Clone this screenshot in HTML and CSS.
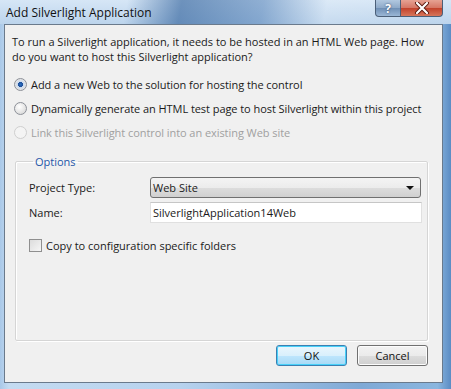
FILE: index.html
```html
<!DOCTYPE html>
<html lang="en">
<head>
    <meta charset="UTF-8">
    <title>Add Silverlight Application</title>
    <link rel="stylesheet" href="styles.css">
</head>
<body>
    <div class="window">
        <!-- title bar -->
        <div class="titlebar">
            <span class="title">Add Silverlight Application</span>
            <div class="caption-buttons">
                <div class="cap-btn help">?</div>
                <div class="cap-btn close">
                    <svg width="16" height="12" viewBox="0 0 16 12">
                        <path d="M3 1 L13 11 M13 1 L3 11" stroke="#5a1a10" stroke-width="4" stroke-linecap="round"/>
                        <path d="M3 1 L13 11 M13 1 L3 11" stroke="#fff" stroke-width="2.2" stroke-linecap="round"/>
                    </svg>
                </div>
            </div>
        </div>

        <div class="client">
            <p class="intro">To run a Silverlight application, it needs to be hosted in an HTML Web page. How do you want to host this Silverlight application?</p>

            <div class="options">
                <label class="radio-row">
                    <span class="radio checked"></span>
                    Add a new Web to the solution for hosting the control
                </label>
                <label class="radio-row">
                    <span class="radio"></span>
                    Dynamically generate an HTML test page to host Silverlight within this project
                </label>
                <label class="radio-row disabled">
                    <span class="radio"></span>
                    Link this Silverlight control into an existing Web site
                </label>
            </div>

            <fieldset class="group">
                <legend>Options</legend>
                <div class="field-row">
                    <span class="field-label">Project Type:</span>
                    <div class="combo">
                        <span>Web Site</span>
                        <span class="arrow"></span>
                    </div>
                </div>
                <div class="field-row">
                    <span class="field-label">Name:</span>
                    <div class="textbox">SilverlightApplication14Web</div>
                </div>
                <label class="check-row">
                    <span class="checkbox"></span>
                    Copy to configuration specific folders
                </label>
            </fieldset>

            <div class="buttons">
                <button class="btn default">OK</button>
                <button class="btn">Cancel</button>
            </div>
        </div>
    </div>
</body>
</html>
```

FILE: styles.css
```css
body {
    margin: 0;
    width: 451px;
    height: 389px;
    overflow: hidden;
    font-family: "Open Sans", "Noto Sans", sans-serif;
    font-size: 11px;
    color: #1a1a1a;
}

.window {
    height: 389px;
    display: flex;
    flex-direction: column;
    background: linear-gradient(90deg, #a9c8e8 0%, #c4dbf1 2%, #b7d2ee 40%, #7fa9d6 80%, #8ab6df 97%, #5b8cc4 100%);
}

/* title bar */
.titlebar {
    height: 24px;
    display: flex;
    align-items: flex-start;
    justify-content: space-between;
    background:
        linear-gradient(100deg, rgba(255,255,255,0) 0%, rgba(255,255,255,0) 28%, rgba(40,90,150,0.6) 40%, rgba(60,110,170,0.45) 58%, rgba(255,255,255,0.15) 72%, rgba(255,255,255,0) 100%),
        linear-gradient(180deg, #d6e6f6 0%, #bcd4ec 100%);
}

.title {
    margin: 4px 0 0 6px;
    font-size: 12px;
    color: #111;
}

.caption-buttons {
    display: flex;
    margin-right: 8px;
}

.cap-btn {
    height: 16px;
    border: 1px solid #4b5f78;
    border-top: none;
    display: flex;
    align-items: center;
    justify-content: center;
}

.help {
    width: 24px;
    border-radius: 0 0 0 4px;
    background: linear-gradient(180deg, #b2c8e0 0%, #8ea9c8 50%, #6f8fb5 51%, #9bb7d6 100%);
    color: #fff;
    font-weight: bold;
    font-size: 12px;
    text-shadow: 0 0 2px #243a5c;
}

.close {
    width: 41px;
    border-left: none;
    border-radius: 0 0 4px 0;
    background: linear-gradient(180deg, #e6a293 0%, #d57563 50%, #c2412a 51%, #d6765b 100%);
}

/* client area */
.client {
    flex: 1;
    margin: 0 8px 6px 4px;
    border: 1px solid #6a7a8c;
    background: #f0f0f0;
    padding: 9px 0 0 0;
}

.intro {
    margin: 0 0 0 7px;
    width: 425px;
    line-height: 15px;
}

.options {
    margin: 14px 0 0 9px;
    display: flex;
    flex-direction: column;
    gap: 11px;
    letter-spacing: -0.06px;
}

.radio-row {
    display: flex;
    align-items: center;
    gap: 4px;
    height: 13px;
}

.radio {
    width: 11px;
    height: 11px;
    border: 1px solid #8d9199;
    border-radius: 50%;
    background: radial-gradient(circle at 40% 35%, #ffffff 0%, #e8e8e8 50%, #cfcfcf 100%);
}

.radio.checked {
    background: radial-gradient(circle, #2a6fc0 0%, #1d4f9a 30%, #c9d9ee 36%, #e4e4e4 70%, #d0d0d0 100%);
}

.disabled {
    color: #a0a0a0;
}

.disabled .radio {
    border-color: #cfcfcf;
    background: #f4f4f4;
}

/* group box */
.group {
    margin: 15px 14px 0 10px;
    padding: 4px 0 0 13px;
    height: 181px;
    border: 1px solid #d5d5d5;
    box-shadow: inset 1px 1px #fff, 1px 1px #fff;
    border-radius: 2px;
}

.group legend {
    padding: 0 2px;
    margin-left: 4px;
    color: #1e57a8;
}

.field-row {
    display: flex;
    align-items: center;
    height: 21px;
    margin-top: 4px;
}

.field-label {
    width: 121px;
}

.combo {
    width: 265px;
    height: 19px;
    padding: 0 2px;
    border: 1px solid #707070;
    border-radius: 3px;
    background: linear-gradient(180deg, #f4f4f4 0%, #ececec 50%, #dddddd 51%, #d0d0d0 100%);
    display: flex;
    align-items: center;
    justify-content: space-between;
}

.arrow {
    width: 0;
    height: 0;
    margin-right: 4px;
    border-left: 4px solid transparent;
    border-right: 4px solid transparent;
    border-top: 4px solid #111;
}

.textbox {
    width: 266px;
    height: 19px;
    padding: 0 2px;
    border: 1px solid #e0e0e0;
    border-top-color: #c6c6c6;
    background: #fff;
    display: flex;
    align-items: center;
}

.check-row {
    display: flex;
    align-items: center;
    gap: 4px;
    margin-top: 15px;
}

.checkbox {
    width: 11px;
    height: 11px;
    border: 1px solid #8f8f8f;
    background: linear-gradient(135deg, #dcdcdc 0%, #f6f6f6 100%);
}

/* buttons */
.buttons {
    display: flex;
    justify-content: flex-end;
    gap: 10px;
    margin: 4px 14px 0 0;
}

.btn {
    width: 71px;
    height: 21px;
    font-family: inherit;
    font-size: 11px;
    color: #111;
    border: 1px solid #707070;
    border-radius: 3px;
    background: linear-gradient(180deg, #f2f2f2 0%, #ebebeb 50%, #dddddd 51%, #cfcfcf 100%);
    box-shadow: inset 0 0 0 1px #fcfcfc;
    padding: 0;
}

.btn.default {
    border-color: #3c7fb1;
    box-shadow: inset 0 0 0 1px #48d1f9;
    background: linear-gradient(180deg, #eaf6fd 0%, #d9f0fc 50%, #bee6fd 51%, #a7d9f5 100%);
}
```
